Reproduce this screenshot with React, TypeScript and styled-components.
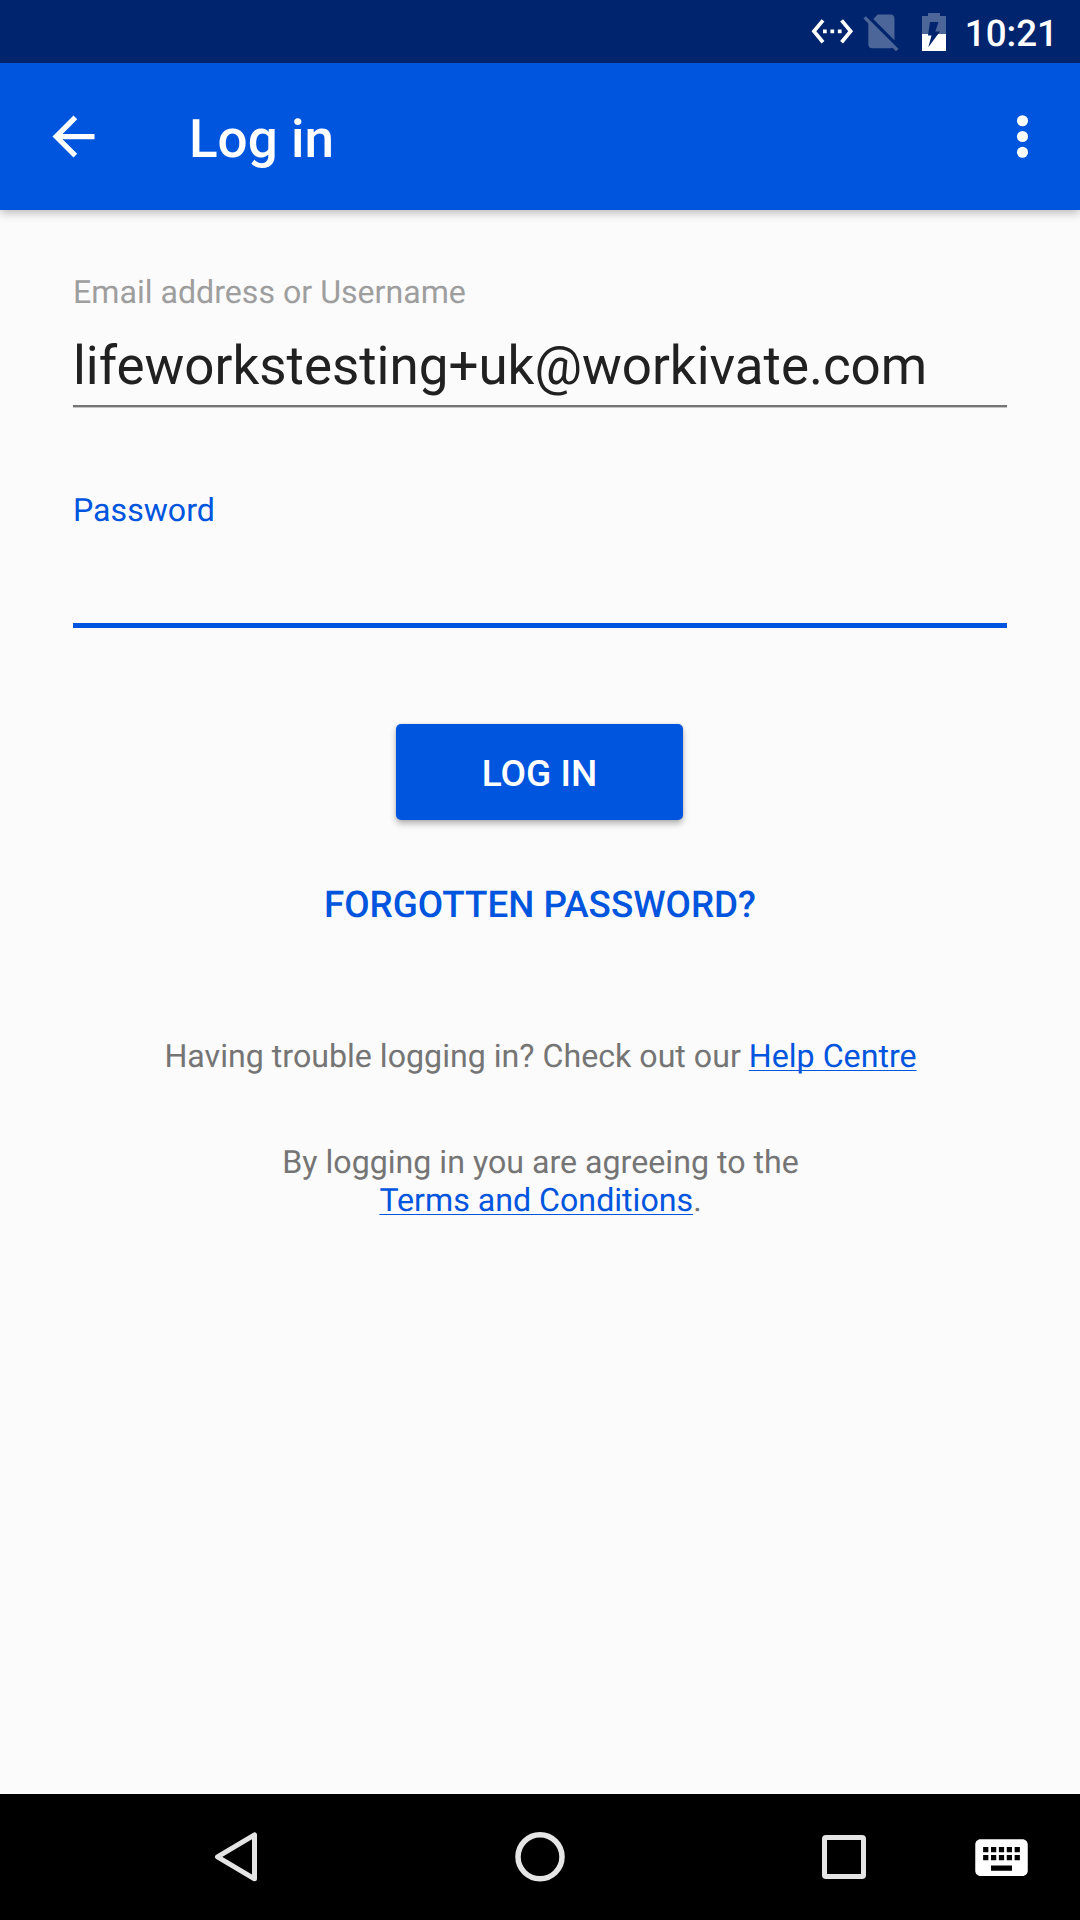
import React from 'react';
import styled, { createGlobalStyle } from 'styled-components';

const BLUE = '#0055de';

const GlobalStyle = createGlobalStyle`
  * { box-sizing: border-box; }
  body {
    margin: 0;
    background: #fbfbfb;
    font-family: Roboto, "Liberation Sans", sans-serif;
    text-rendering: geometricPrecision;
  }
`;

const Screen = styled.div`
  display: flex;
  flex-direction: column;
  width: 1080px;
  height: 1920px;
  overflow: hidden;
  background: #fbfbfb;
`;

const StatusBar = styled.header`
  display: flex;
  justify-content: flex-end;
  align-items: center;
  height: 63px;
  padding-right: 22px;
  background: #00256e;
  flex: none;
`;

const Glyph = styled.svg<{ $gap?: number; $drop?: number }>`
  display: block;
  flex: none;
  margin-right: ${(p) => p.$gap ?? 0}px;
  margin-top: ${(p) => p.$drop ?? 0}px;
`;

const Clock = styled.span`
  color: #fff;
  font-size: 36.75px;
  line-height: 44px;
  padding-top: 5px;
  font-weight: 500;
`;

const AppBar = styled.nav`
  display: flex;
  align-items: center;
  height: 147px;
  padding: 0 26px 0 42px;
  background: ${BLUE};
  box-shadow: 0 3px 9px rgba(0, 0, 0, 0.26);
  flex: none;
`;

const IconButton = styled.button`
  padding: 0;
  border: 0;
  background: none;
`;

const Title = styled.h1`
  flex: 1;
  margin: 0;
  padding: 5px 0 0 84px;
  color: #fff;
  font-size: 53px;
  line-height: 62px;
  font-weight: 500;
`;

const Content = styled.main`
  display: flex;
  flex-direction: column;
  align-items: center;
  flex: 1;
  padding: 63px 73px 0;
`;

const Field = styled.label<{ $active?: boolean }>`
  display: flex;
  flex-direction: column;
  width: 934px;
  height: ${(p) => (p.$active ? 137 : 134)}px;
  margin-bottom: ${(p) => (p.$active ? 96 : 84)}px;
`;

const FieldName = styled.span<{ $active?: boolean }>`
  font-size: 32.13px;
  line-height: 38px;
  color: ${(p) => (p.$active ? BLUE : '#9e9e9e')};
`;

const FieldInput = styled.input<{ $active?: boolean }>`
  flex: 1;
  width: 100%;
  min-height: 0;
  padding: ${(p) => (p.$active ? 0 : '15px 0 0')};
  border: 0;
  border-bottom: ${(p) => (p.$active ? `5px solid ${BLUE}` : '2px solid #757575')};
  box-shadow: ${(p) => (p.$active ? 'none' : '0 1px 0 #c4c4c4')};
  outline: 0;
  background: none;
  color: #212121;
  font: 400 52.93px Roboto, "Liberation Sans", sans-serif;
`;

const LoginButton = styled.button`
  width: 287px;
  height: 96px;
  margin-right: 1px;
  padding: 3px 0 0;
  border: 0;
  border-radius: 5px;
  background: ${BLUE};
  color: #fff;
  font: 500 37px/44px Roboto, "Liberation Sans", sans-serif;
  box-shadow: 0 4px 6px rgba(0, 0, 0, 0.27), 0 0 3px rgba(0, 0, 0, 0.12);
`;

const ForgottenLink = styled.a`
  margin-top: 63px;
  color: ${BLUE};
  font-size: 36.8px;
  line-height: 44px;
  font-weight: 500;
`;

const Note = styled.p<{ $top: number }>`
  margin: ${(p) => p.$top}px 0 0;
  padding-left: 1px;
  color: #757575;
  font-size: 32.17px;
  line-height: 38px;
  text-align: center;
  white-space: nowrap;
`;

const InlineLink = styled.a`
  color: ${BLUE};
  text-decoration: underline;
  text-decoration-thickness: 1px;
  text-underline-offset: 3px;
  text-decoration-skip-ink: none;
`;

const NavBar = styled.footer`
  display: flex;
  align-items: center;
  height: 126px;
  padding: 0 0 1px 204px;
  background: #000;
  flex: none;
`;

export default function App() {
  return (
    <Screen>
      <GlobalStyle />
      <StatusBar>
        <Glyph $gap={4.5} width="44.6" height="44.6" viewBox="0 0 24 24" fill="#fff">
          <path d="M7.77 6.76L6.23 5.48.82 12l5.41 6.52 1.54-1.28L3.42 12l4.35-5.24zM7 13h2v-2H7v2zm10-2h-2v2h2v-2zm-6 2h2v-2h-2v2zm6.77-7.52l-1.54 1.28L20.58 12l-4.35 5.24 1.54 1.28L23.18 12l-5.41-6.52z" />
        </Glyph>
        <Glyph $gap={18} width="44.8" height="44.8" viewBox="0 0 24 24" fill="#4d669a">
          <path d="M18.99 5c0-1.1-.89-2-1.99-2h-7L7.66 5.34 19 16.68 18.99 5zM3.65 3.88L2.38 5.15 5 7.77V19c0 1.1.9 2 2 2h10.01c.35 0 .67-.1.96-.26l1.88 1.88 1.27-1.27L3.65 3.88z" />
        </Glyph>
        <Glyph $gap={19} width="24" height="38" viewBox="0 0 24 38">
          <path fill="#4d669a" d="M0 3h6V0h12v3h6v18H0z" />
          <path fill="#fff" d="M0 21h24v17H0z" />
          <path fill="#00256e" d="M8 9h8.500l-3.200 9.500H18L6.300 34.300 9.500 22.500H6z" />
        </Glyph>
        <Clock>10:21</Clock>
      </StatusBar>
      <AppBar>
        <IconButton aria-label="Back">
          <Glyph width="63" height="63" viewBox="0 0 24 24" fill="#fff">
            <path d="M20 11H7.830l5.590-5.590L12 4l-8 8 8 8 1.410-1.410L7.830 13H20v-2z" />
          </Glyph>
        </IconButton>
        <Title>Log in</Title>
        <IconButton aria-label="More">
          <Glyph width="63" height="63" viewBox="0 0 24 24" fill="#fff">
            <circle cx="12" cy="6" r="2.100" />
            <circle cx="12" cy="12" r="2.100" />
            <circle cx="12" cy="18" r="2.100" />
          </Glyph>
        </IconButton>
      </AppBar>
      <Content>
        <Field>
          <FieldName>Email address or Username</FieldName>
          <FieldInput defaultValue="lifeworkstesting+uk@workivate.com" />
        </Field>
        <Field $active>
          <FieldName $active>Password</FieldName>
          <FieldInput $active type="password" />
        </Field>
        <LoginButton>LOG IN</LoginButton>
        <ForgottenLink>FORGOTTEN PASSWORD?</ForgottenLink>
        <Note $top={110}>
          Having trouble logging in? Check out our <InlineLink>Help Centre</InlineLink>
        </Note>
        <Note $top={68}>
          By logging in you are agreeing to the
          <br />
          <InlineLink>Terms and Conditions</InlineLink>.
        </Note>
      </Content>
      <NavBar>
        <Glyph $gap={241} width="63" height="63" viewBox="0 0 63 63" fill="none" stroke="#e5e5e5" strokeWidth="5" strokeLinejoin="round">
          <path d="M13.500 31.800L50.500 9.800v44z" />
        </Glyph>
        <Glyph $gap={241} width="63" height="63" viewBox="0 0 63 63" fill="none" stroke="#e5e5e5" strokeWidth="5.500">
          <circle cx="32" cy="31.800" r="22" />
        </Glyph>
        <Glyph $gap={95} width="63" height="63" viewBox="0 0 63 63" fill="none" stroke="#e5e5e5" strokeWidth="5">
          <rect x="12.500" y="12.500" width="39" height="39" rx="1.500" />
        </Glyph>
        <Glyph $drop={2} width="63" height="63" viewBox="0 0 24 24" fill="#fff">
          <path d="M20 5H4c-1.100 0-1.990.9-1.990 2L2 17c0 1.100.9 2 2 2h16c1.100 0 2-.9 2-2V7c0-1.100-.9-2-2-2zm-9 3h2v2h-2V8zm0 3h2v2h-2v-2zM8 8h2v2H8V8zm0 3h2v2H8v-2zm-1 2H5v-2h2v2zm0-3H5V8h2v2zm9 7H8v-2h8v2zm0-4h-2v-2h2v2zm0-3h-2V8h2v2zm3 3h-2v-2h2v2zm0-3h-2V8h2v2z" />
        </Glyph>
      </NavBar>
    </Screen>
  );
}
